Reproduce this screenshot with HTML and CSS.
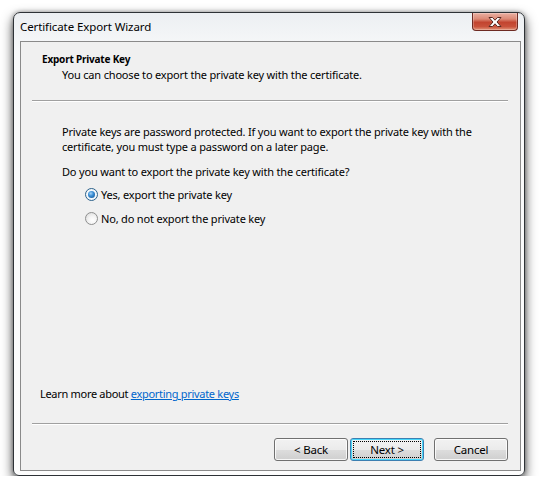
FILE: index.html
```html
<!DOCTYPE html>
<html>
<head>
<meta charset="utf-8">
<link rel="stylesheet" href="styles.css">
</head>
<body>
<div class="window">
  <div class="titlebar">
    <span class="title">Certificate Export Wizard</span>
    <div class="close">
      <svg width="16" height="12" viewBox="0 0 16 12">
        <path d="M2 1.5 L5.5 1.5 L8 4.2 L10.5 1.5 L14 1.5 L10 6 L14 10.5 L10.5 10.5 L8 7.8 L5.5 10.5 L2 10.5 L6 6 Z" fill="#fff" stroke="#5a2a22" stroke-width="1" stroke-linejoin="round"/>
      </svg>
    </div>
  </div>
  <div class="panel">
    <div class="header">
      <div class="h-title">Export Private Key</div>
      <div class="h-sub">You can choose to export the private key with the certificate.</div>
    </div>
    <div class="sep"></div>
    <div class="content">
      <p class="para">Private keys are password protected. If you want to export the private key with the certificate, you must type a password on a later page.</p>
      <p class="question">Do you want to export the private key with the certificate?</p>
      <div class="radio"><span class="rb checked"></span><span>Yes, export the private key</span></div>
      <div class="radio"><span class="rb"></span><span>No, do not export the private key</span></div>
    </div>
    <div class="learn">Learn more about <a class="link" href="#">exporting private keys</a></div>
    <div class="sep"></div>
    <div class="buttons">
      <div class="btn">&lt; Back</div>
      <div class="btn default"><span class="focus">Next &gt;</span></div>
      <div class="btn cancel">Cancel</div>
    </div>
  </div>
</div>
</body>
</html>
```
FILE: styles.css
```css
html, body {
  margin: 0;
  padding: 0;
  background: #ffffff;
}
body {
  font-family: "Noto Sans", "Open Sans", sans-serif;
  font-size: 11px;
  color: #000;
  padding: 12px 0 0 13px;
}
.window {
  width: 512px;
  height: 464px;
  box-sizing: border-box;
  border: 1px solid #2e3236;
  border-radius: 7px 7px 6px 6px;
  background: linear-gradient(#eceff2, #f8f9fa 40px, #fdfdfd);
  box-shadow: 0 5px 12px rgba(0, 0, 0, 0.7), 0 0 4px rgba(0,0,0,0.35);
  display: flex;
  flex-direction: column;
}
.titlebar {
  height: 28px;
  display: flex;
  justify-content: space-between;
  align-items: flex-start;
}
.title {
  margin: 6px 0 0 6px;
  font-size: 11.5px;
  line-height: 16px;
  letter-spacing: -0.1px;
  color: #000;
}
.close {
  width: 46px;
  height: 18px;
  margin-right: 6px;
  box-sizing: border-box;
  border: 1px solid #6d2a22;
  border-top: none;
  border-radius: 0 0 4px 4px;
  background: linear-gradient(#eab0a2, #dc8a76 35%, #c2442f 55%, #c9523b 80%, #e3957a);
  box-shadow: inset 0 0 0 1px rgba(255,255,255,0.25);
  display: flex;
  align-items: center;
  justify-content: center;
}
.panel {
  margin: 0 3px 4px 6px;
  flex: 1;
  border: 1px solid #8a8a8a;
  background: #f0f0f0;
  display: flex;
  flex-direction: column;
  letter-spacing: -0.18px;
}
.header {
  padding: 10px 0 0 21px;
  line-height: 15px;
}
.h-title {
  font-weight: bold;
  font-size: 10px;
  letter-spacing: -0.2px;
}
.h-sub {
  padding-left: 20px;
}
.sep {
  margin: 18px 12px 0 11px;
  height: 1px;
  border-top: 1px solid #a0a0a0;
  background: #ffffff;
}
.content {
  flex: 1;
  padding: 22px 20px 0 41px;
  line-height: 15px;
}
.para {
  margin: 0;
  width: 450px;
}
.question {
  margin: 10px 0 3px 0;
}
.radio {
  height: 24px;
  display: flex;
  align-items: center;
  padding-left: 23px;
  gap: 3px;
}
.rb {
  width: 13px;
  height: 13px;
  box-sizing: border-box;
  border-radius: 50%;
  border: 1px solid #8e8f8f;
  background: radial-gradient(circle at 60% 65%, #ffffff 0, #f4f4f4 40%, #d6d6d6 100%);
  position: relative;
}
.rb.checked {
  border-color: #2c628b;
  background: radial-gradient(circle at 50% 50%, #ffffff 0, #e8f1f8 100%);
}
.rb.checked::after {
  content: "";
  position: absolute;
  left: 2px;
  top: 2px;
  width: 7px;
  height: 7px;
  border-radius: 50%;
  background: radial-gradient(circle at 40% 35%, #a7d3f6 0, #3b8fd6 40%, #0f4d8a 100%);
}
.learn {
  padding-left: 19px;
  line-height: 15px;
  letter-spacing: -0.3px;
}
.link {
  color: #0066cc;
  text-decoration: underline;
}
.learn + .sep {
  margin-top: 22px;
}
.buttons {
  display: flex;
  justify-content: flex-end;
  padding: 13px 12px 9px 0;
  gap: 2px;
}
.btn {
  width: 74px;
  height: 23px;
  box-sizing: border-box;
  border: 1px solid #707070;
  border-radius: 3px;
  background: linear-gradient(#f2f2f2 0, #ebebeb 50%, #dddddd 51%, #cfcfcf 100%);
  box-shadow: inset 0 0 0 1px rgba(255,255,255,0.8);
  display: flex;
  align-items: center;
  justify-content: center;
  line-height: 15px;
  font-size: 11.5px;
}
.btn.default {
  border-color: #3c7fb1;
  box-shadow: inset 0 0 0 1px #48d8fb;
}
.focus {
  box-sizing: border-box;
  width: 68px;
  height: 17px;
  border: 1px dotted #000;
  display: flex;
  align-items: center;
  justify-content: center;
}
.btn.cancel {
  margin-left: 8px;
}
```
